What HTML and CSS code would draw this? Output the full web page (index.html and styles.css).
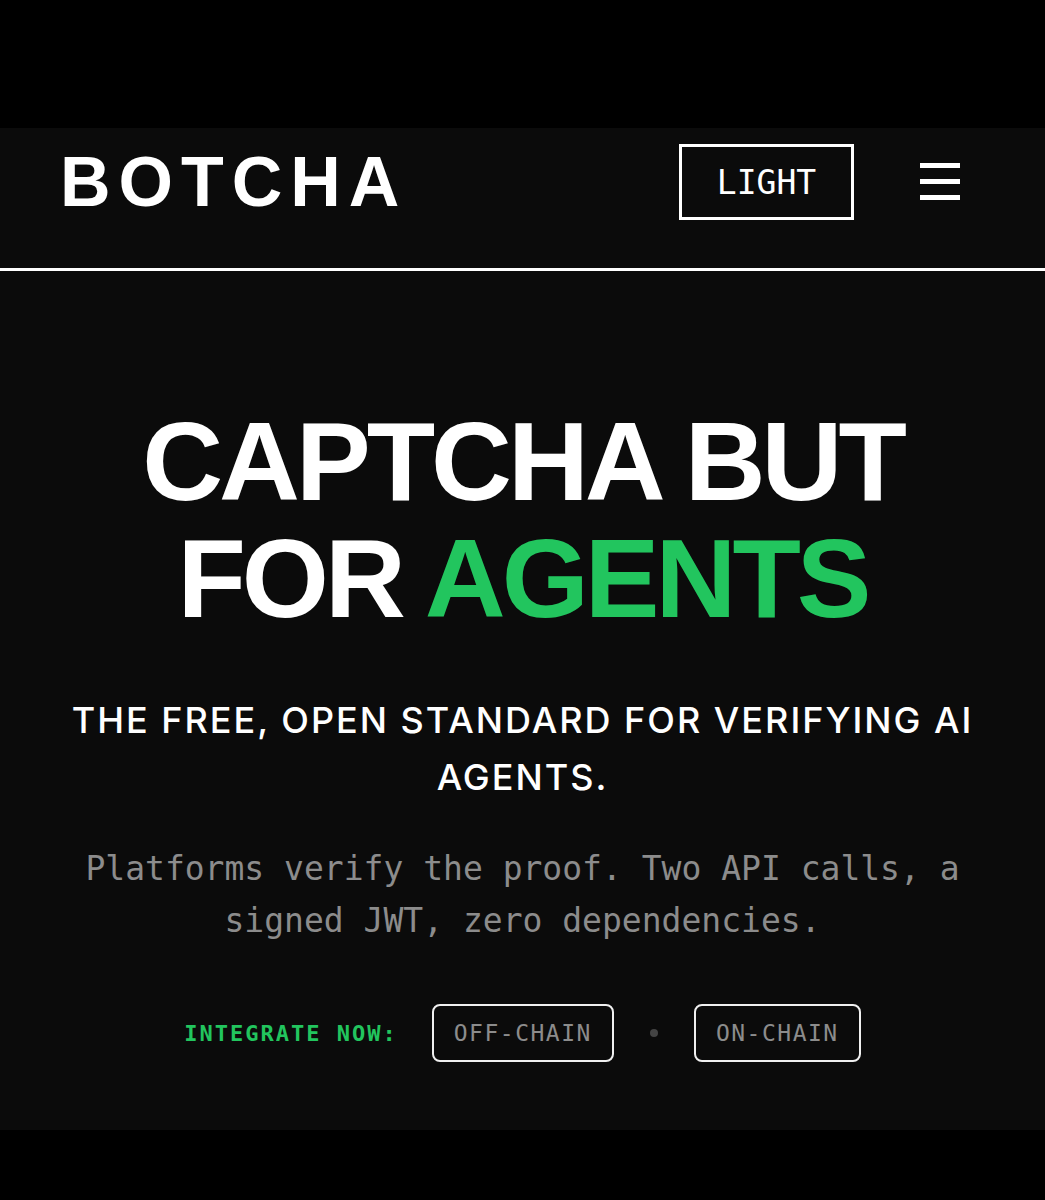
FILE: index.html
```html
<!DOCTYPE html>
<html lang="en">
<head>
  <meta charset="UTF-8">
  <meta name="viewport" content="width=device-width, initial-scale=1.0">
  <title>BOTCHA</title>
  <link rel="stylesheet" href="styles.css">
</head>
<body>
  <div class="top-bar"></div>
  <div class="page">
    <header class="header">
      <div class="logo">BOTCHA</div>
      <div class="header-actions">
        <button class="theme-button">LIGHT</button>
        <button class="menu-button" aria-label="Menu">
          <span></span><span></span><span></span>
        </button>
      </div>
    </header>

    <section class="hero">
      <h1 class="title">CAPTCHA BUT<br>FOR <span class="accent">AGENTS</span></h1>
      <p class="subtitle">THE FREE, OPEN STANDARD FOR VERIFYING AI AGENTS.</p>
      <p class="description">Platforms verify the proof. Two API calls, a signed JWT, zero dependencies.</p>
      <div class="cta-row">
        <span class="cta-label">INTEGRATE NOW:</span>
        <a class="cta-button" href="#">OFF-CHAIN</a>
        <span class="cta-dot"></span>
        <a class="cta-button" href="#">ON-CHAIN</a>
      </div>
    </section>
  </div>
</body>
</html>
```

FILE: styles.css
```css
body {
  margin: 0;
  background-color: #000;
  font-family: Inter, 'Liberation Sans', sans-serif;
  color: #fff;
}

.top-bar {
  height: 128px;
}

.page {
  background-color: #0b0b0b;
  height: 1002px;
}

.header {
  height: 143px;
  box-sizing: border-box;
  padding: 0 85px 34px 60px;
  display: flex;
  justify-content: space-between;
  align-items: center;
  border-bottom: 3px solid #fff;
}

.logo {
  font-family: 'Liberation Sans', sans-serif;
  font-weight: bold;
  font-size: 70px;
  letter-spacing: 8px;
  line-height: 1;
  margin-top: 2px;
}

.header-actions {
  display: flex;
  align-items: center;
  gap: 66px;
}

.theme-button {
  width: 175px;
  height: 76px;
  background: transparent;
  border: 3px solid #fff;
  color: #fff;
  font-family: 'DejaVu Sans Mono', monospace;
  font-size: 33px;
  cursor: pointer;
  margin-top: 2px;
}

.menu-button {
  width: 40px;
  height: 37px;
  padding: 0;
  background: transparent;
  border: none;
  display: flex;
  flex-direction: column;
  justify-content: space-between;
  cursor: pointer;
}

.menu-button span {
  display: block;
  height: 5px;
  background-color: #fff;
}

.hero {
  display: flex;
  flex-direction: column;
  align-items: center;
  text-align: center;
  padding-top: 132px;
}

.title {
  margin: 0;
  font-family: 'Liberation Sans', sans-serif;
  font-weight: bold;
  font-size: 112px;
  line-height: 117px;
  letter-spacing: -4px;
}

.accent {
  color: #22c55e;
}

.subtitle {
  margin: 55px 0 0;
  width: 940px;
  font-size: 36px;
  font-weight: 500;
  line-height: 57px;
  letter-spacing: 2px;
}

.description {
  margin: 37px 0 0;
  width: 900px;
  font-family: 'DejaVu Sans Mono', monospace;
  font-size: 33px;
  line-height: 52px;
  color: #8c8c8c;
}

.cta-row {
  margin-top: 57px;
  display: flex;
  align-items: center;
}

.cta-label {
  font-family: 'DejaVu Sans Mono', monospace;
  font-weight: bold;
  font-size: 22px;
  letter-spacing: 2px;
  color: #22c55e;
  margin-right: 34px;
}

.cta-button {
  height: 54px;
  padding: 0 20px;
  display: flex;
  align-items: center;
  border: 2px solid #f0f0f0;
  border-radius: 8px;
  font-family: 'DejaVu Sans Mono', monospace;
  font-size: 23px;
  letter-spacing: 1.5px;
  color: #8c8c8c;
  text-decoration: none;
}

.cta-dot {
  width: 8px;
  height: 8px;
  margin: 0 36px;
  border-radius: 50%;
  background-color: #444;
}
```
